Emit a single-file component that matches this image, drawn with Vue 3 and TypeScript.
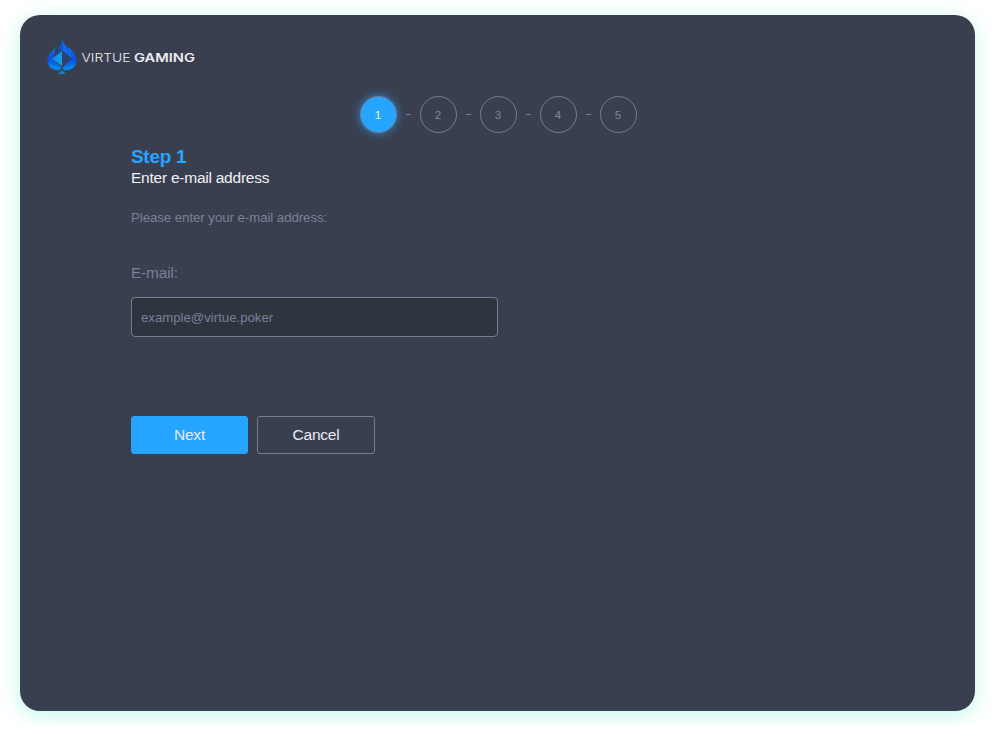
<script setup lang="ts">
import { ref } from 'vue'

const steps: number[] = [1, 2, 3, 4, 5]
const current = ref<number>(1)
const email = ref<string>('')

function next(): void {
  if (current.value < steps.length) current.value++
}

function cancel(): void {
  current.value = 1
  email.value = ''
}
</script>

<template>
  <main class="card">
    <header class="brand">
      <svg class="spade" viewBox="0 0 30 38" aria-hidden="true">
        <defs>
          <linearGradient id="wing" x1="0" y1="0" x2="0" y2="1">
            <stop offset="0" stop-color="#0a78f0" />
            <stop offset="0.5" stop-color="#0650e6" />
            <stop offset="1" stop-color="#0a86ee" />
          </linearGradient>
          <linearGradient id="glow" x1="0" y1="0" x2="1" y2="0">
            <stop offset="0" stop-color="#0a84ee" />
            <stop offset="1" stop-color="#14a0ee" />
          </linearGradient>
        </defs>
        <path d="M8.500 8.500C6 13 .5 16.500 .5 22.500C.5 28.500 5 32.500 13 32.500L14.500 29.500L4.500 20.500L7.500 16Z" fill="url(#wing)" />
        <path d="M22 9C25 13 29.500 16.500 29.500 22.500C29.500 28.500 25 32.500 17 32.500L15.500 29.500L25 20.500L22 15Z" fill="url(#wing)" />
        <path d="M15.300 1L12 9L10.500 16L15.300 12.500Z" fill="#1650a8" />
        <path d="M15.300 1C17 6 19 9 22.500 12L25 20.500L15.300 12.500Z" fill="#0a6cf4" />
        <path d="M4.500 20.500L15 13.500V28Z" fill="url(#glow)" />
        <path d="M15.500 14.500L24 20.500L15.500 27.500Z" fill="#2b426f" />
        <path d="M2 26C6 28 10 29.500 14.500 29.500C11 32.500 4 32 2 26Z" fill="#0a86e6" />
        <path d="M28 26C24 28 20 29.500 15.500 29.500C19 32.500 26 32 28 26Z" fill="#0a86e6" />
        <path d="M15 32.500L19.500 36.500L15 35.500L10.500 36.500Z" fill="#0c91cf" />
      </svg>
      <svg class="wordmark" viewBox="0 0 116 14" role="img" aria-label="Virtue Gaming">
        <text x="0.500" y="11.500" textLength="49" lengthAdjust="spacingAndGlyphs" class="light">VIRTUE</text>
        <text x="53" y="11.500" textLength="61" lengthAdjust="spacingAndGlyphs" class="heavy">GAMING</text>
      </svg>
    </header>

    <ol class="steps">
      <template v-for="step in steps" :key="step">
        <li v-if="step > 1" class="dash" aria-hidden="true"></li>
        <li class="step" :class="{ active: step === current }">{{ step }}</li>
      </template>
    </ol>

    <form class="content" @submit.prevent="next">
      <h1 class="title">Step {{ current }}</h1>
      <h2 class="subtitle">Enter e-mail address</h2>
      <p class="hint">Please enter your e-mail address:</p>
      <label class="label" for="email">E-mail:</label>
      <input id="email" v-model="email" class="field" type="text" placeholder="example@virtue.poker" />
      <div class="actions">
        <button class="btn primary" type="submit">Next</button>
        <button class="btn" type="button" @click="cancel">Cancel</button>
      </div>
    </form>
  </main>
</template>

<style>
body {
  background: #fff;
}
</style>

<style scoped>
.card {
  box-sizing: border-box;
  width: 955px;
  height: 696px;
  margin: 15px 20px;
  padding-top: 23px;
  border-radius: 20px;
  background: #3a3f4f;
  box-shadow: 0 4px 20px rgba(100, 235, 210, 0.4);
  font-family: "Liberation Sans", Arial, sans-serif;
  display: flow-root;
}
.brand {
  display: flex;
  align-items: center;
  height: 38px;
  padding-left: 27px;
  gap: 4px;
}
.spade {
  width: 30px;
  height: 38px;
}
.wordmark {
  width: 116px;
  height: 14px;
}
.wordmark text {
  font-family: Inter, "Liberation Sans", sans-serif;
  font-size: 11.5px;
  fill: #eceef2;
}
.wordmark .light {
  font-weight: 300;
}
.wordmark .heavy {
  font-weight: 600;
}
.steps {
  display: flex;
  align-items: center;
  justify-content: center;
  margin: 20px 0 0;
  padding: 0 0 0 1px;
  list-style: none;
}
.step {
  box-sizing: border-box;
  width: 37px;
  height: 37px;
  border: 1px solid #777b90;
  border-radius: 50%;
  color: #80839e;
  font-size: 11.5px;
  line-height: 36px;
  text-align: center;
}
.step.active {
  background: #25a5ff;
  color: #eaf6ff;
  box-shadow: 0 0 8px rgba(37, 165, 255, 0.75);
}
.dash {
  width: 5px;
  height: 1px;
  margin: 0 9px;
  background: #777b90;
}
.content {
  margin: 12px 0 0 111px;
}
.title,
.subtitle,
.hint {
  margin: 0;
}
.title {
  color: #25a5ff;
  font-size: 19px;
  letter-spacing: -0.3px;
  line-height: 23px;
}
.subtitle {
  color: #f0f1f5;
  font-size: 15.5px;
  letter-spacing: -0.24px;
  font-weight: 400;
  line-height: 20px;
}
.hint {
  margin-top: 21px;
  color: #7c7f9a;
  font-size: 13.3px;
  letter-spacing: -0.08px;
  line-height: 18px;
}
.label {
  display: block;
  margin-top: 36px;
  color: #7c7f9a;
  font-size: 15.3px;
  letter-spacing: -0.1px;
  line-height: 20px;
}
.field {
  display: block;
  box-sizing: border-box;
  width: 367px;
  height: 40px;
  margin-top: 14px;
  padding: 0 9px;
  border: 1px solid #777b90;
  border-radius: 4px;
  outline: none;
  background: #2f353f;
  color: #f0f1f5;
  font: 13.2px "Liberation Sans", Arial, sans-serif;
}
.field::placeholder {
  color: #7c7f9a;
}
.actions {
  display: flex;
  gap: 9px;
  margin-top: 79px;
}
.btn {
  box-sizing: border-box;
  width: 118px;
  height: 38px;
  padding: 0 0 1px;
  border: 1px solid #777b90;
  border-radius: 3px;
  background: transparent;
  color: #e9ebf0;
  font: 15.5px "Liberation Sans", Arial, sans-serif;
  letter-spacing: -0.2px;
}
.btn.primary {
  width: 117px;
  border-color: #25a5ff;
  background: #25a5ff;
}
</style>
